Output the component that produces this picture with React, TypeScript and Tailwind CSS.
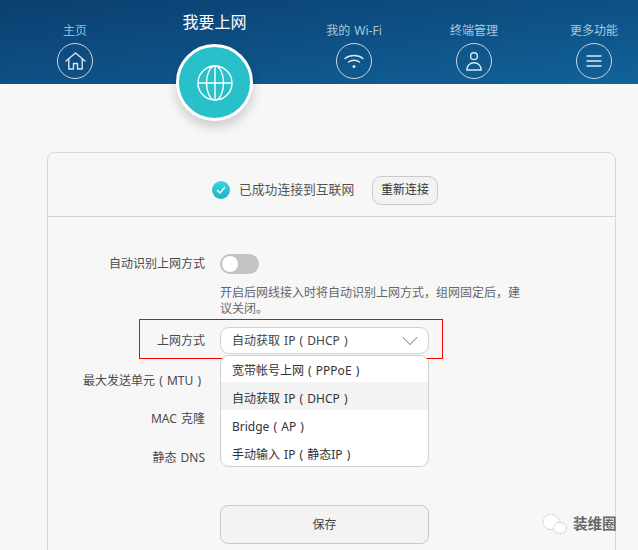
import type { ReactNode } from "react";
import { ChevronDown } from "lucide-react";

const font = { fontFamily: '"Noto Sans", "Noto Sans CJK SC", sans-serif' };

function HomeIcon() {
  return (
    <svg width="21" height="18" viewBox="0 0 21 18" fill="none" stroke="currentColor" strokeWidth="1.4" strokeLinejoin="round" strokeLinecap="round">
      <path d="M1 9 L10.5 1 L20 9" />
      <path d="M3.8 7 V17 H8.5 V11.5 H12.5 V17 H17.2 V7" />
    </svg>
  );
}

function WifiIcon() {
  return (
    <svg width="20" height="15" viewBox="0 0 20 15" fill="none" stroke="currentColor" strokeWidth="1.5" strokeLinecap="round">
      <path d="M1 4.5 C6 0.4 14 0.4 19 4.5" />
      <path d="M4.5 8 C7.5 5.6 12.5 5.6 15.5 8" />
      <circle cx="10" cy="12.5" r="1.5" fill="currentColor" stroke="none" />
    </svg>
  );
}

function UserIcon() {
  return (
    <svg width="16" height="19" viewBox="0 0 16 19" fill="none" stroke="currentColor" strokeWidth="1.4">
      <circle cx="8" cy="4.2" r="3.4" />
      <path d="M0.8 18 C0.8 13.5 4 10.8 8 10.8 C12 10.8 15.2 13.5 15.2 18 Z" />
    </svg>
  );
}

function MenuIcon() {
  return (
    <svg width="16" height="12" viewBox="0 0 16 12" fill="none" stroke="currentColor" strokeWidth="1.4">
      <path d="M0.5 1 H15.5 M0.5 6 H15.5 M0.5 11 H15.5" />
    </svg>
  );
}

function GlobeIcon() {
  return (
    <svg width="36" height="36" viewBox="0 0 36 36" fill="none" stroke="white" strokeWidth="1.4">
      <circle cx="18" cy="18" r="17" />
      <ellipse cx="18" cy="18" rx="8.5" ry="17" />
      <path d="M18 1 V35 M1 18 H35" />
    </svg>
  );
}

function NavItem({ label, labelClass, width, icon }: { label: string; labelClass: string; width: string; icon: ReactNode }) {
  return (
    <div className={`${width} flex shrink-0 flex-col items-center pt-[21px]`}>
      <span className={`h-[19px] text-[12px] leading-[19px] ${labelClass}`}>{label}</span>
      <div className="mt-[3px] flex h-[36px] w-[36px] items-center justify-center rounded-full border-[1.5px] border-[#c9d8e4] text-[#dbe6ee]">
        {icon}
      </div>
    </div>
  );
}

function Row({ label, children, className }: { label: ReactNode; children?: ReactNode; className?: string }) {
  return (
    <div className={`flex items-center ${className ?? ""}`}>
      <span className="w-[143px] whitespace-nowrap text-right text-[12px] text-[#4a4a4a]">{label}</span>
      <div className="ml-[15px]">{children}</div>
    </div>
  );
}

export default function App() {
  const options = ["宽带帐号上网 ( PPPoE )", "自动获取 IP ( DHCP )", "Bridge ( AP )", "手动输入 IP ( 静态IP )"];

  return (
    <div className="relative h-[550px] w-[638px] overflow-hidden bg-[#f7f7f7] [word-spacing:1px]" style={font}>
      <header className="flex h-[84px] bg-gradient-to-br from-[#0b3f70] to-[#116299] pl-[15px]">
        <NavItem label="主页" labelClass="text-[#86c0dc]" width="w-[120px]" icon={<HomeIcon />} />
        <div className="flex w-[159px] shrink-0 flex-col items-center pt-[11px]">
          <span className="h-[22px] text-[16px] leading-[22px] text-white">我要上网</span>
          <div className="mt-[11px] flex h-[77px] w-[77px] shrink-0 items-center justify-center rounded-full border-[3px] border-white bg-[#29c1c9] shadow-[0_6px_12px_rgba(0,0,0,0.18)]">
            <GlobeIcon />
          </div>
        </div>
        <NavItem label="我的 Wi-Fi" labelClass="text-[#a9c9dc]" width="w-[120px]" icon={<WifiIcon />} />
        <NavItem label="终端管理" labelClass="text-[#a9c9dc]" width="w-[120px]" icon={<UserIcon />} />
        <NavItem label="更多功能" labelClass="text-[#a9c9dc]" width="w-[120px]" icon={<MenuIcon />} />
      </header>

      <main className="ml-[47px] mt-[68px] h-[600px] w-[569px] rounded-t-[8px] border border-[#d5d8e0]">
        <div className="flex h-[64px] items-center border-b border-[#d0d3da] pl-[164px] pt-[11px]">
          <span className="flex h-[18px] w-[18px] shrink-0 items-center justify-center rounded-full bg-gradient-to-b from-[#33d9e0] to-[#1fb0c2]">
            <svg width="10" height="8" viewBox="0 0 10 8" fill="none" stroke="white" strokeWidth="1.4">
              <path d="M1 4 L4 7 L9 1" />
            </svg>
          </span>
          <span className="ml-[9px] w-[117px] whitespace-nowrap text-[12.8px] text-[#555]">已成功连接到互联网</span>
          <button className="ml-[16px] h-[29px] w-[66px] rounded-[9px] border border-[#cacaca] bg-[#f2f2f2] text-[12px] text-[#333]">
            重新连接
          </button>
        </div>

        <div className="relative pl-[14px] pt-[37px]">
          <Row label="自动识别上网方式" className="h-[20px]">
            <div className="flex h-[20px] w-[39px] items-center rounded-full bg-[#c2c4c4] pl-[2px]">
              <span className="h-[16px] w-[16px] rounded-full bg-white" />
            </div>
          </Row>
          <p className="ml-[158px] mt-[11px] w-[305px] text-[12px] leading-[16px] text-[#666]">
            开启后网线接入时将自动识别上网方式，组网固定后，建议关闭。
          </p>

          <Row label="上网方式" className="mt-[10px] h-[27px]">
            <div className="flex h-[27px] w-[209px] items-center justify-between rounded-[9px] border border-[#cfcfcf] bg-white pl-[11px] pr-[4px] text-[12px] text-[#444]">
              <span>自动获取 IP ( DHCP )</span>
              <ChevronDown size={28} strokeWidth={0.9} className="text-[#888]" />
            </div>
          </Row>

          <Row label={<span className="pr-[4px]">最大发送单元 ( MTU )</span>} className="mt-[13px] h-[28px]" />
          <Row label="MAC 克隆" className="mt-[10px] h-[28px]" />
          <Row label="静态 DNS" className="mt-[11px] h-[28px]" />

          <div className="ml-[158px] mt-[33px] flex h-[39px] w-[209px] items-center justify-center rounded-[8px] border border-[#c8c8c8] bg-[#f3f3f3] pt-[1px] text-[12px] text-[#444]">
            保存
          </div>

          {/* 下拉菜单和红框都盖在表单上面 */}
          <div className="absolute left-[91px] top-[102px] h-[40px] w-[304px] border border-[#ff0000]" />
          <div className="absolute left-[172px] top-[138px] h-[112px] w-[209px] overflow-hidden rounded-[9px] border border-[#cfcfcf] bg-white text-[12px] text-[#333]">
            <div className="-mt-[2px]">
              {options.map((option, index) => (
                <div key={option} className={`flex h-[28px] items-center pl-[11px] pt-[6px] ${index === 1 ? "bg-[#f3f3f3]" : ""}`}>
                  {option}
                </div>
              ))}
            </div>
          </div>
        </div>
      </main>

      {/* 水印 */}
      <div className="absolute left-[542px] top-[513px] flex items-center gap-[6px] text-[14.5px] font-bold text-[#666]">
        <svg width="25" height="20" viewBox="0 0 25 20" fill="#ffffff" stroke="#999" strokeWidth="0.6" strokeDasharray="1.5 1">
          <ellipse cx="9" cy="8" rx="8" ry="7.5" />
          <ellipse cx="18" cy="14" rx="6.5" ry="5.5" />
        </svg>
        <span>装维圈</span>
      </div>
    </div>
  );
}
